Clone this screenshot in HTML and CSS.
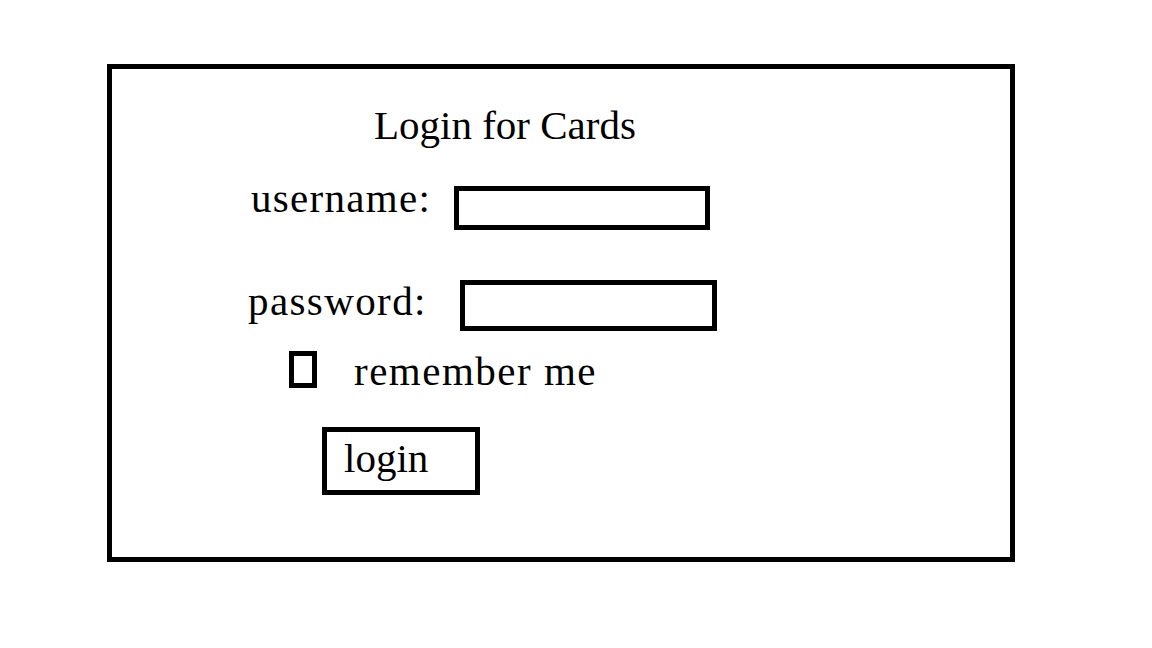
FILE: index.html
```html
<!DOCTYPE html>
<html>
<head>
<meta charset="utf-8">
<title>Login for Cards</title>
<link rel="stylesheet" href="styles.css">
</head>
<body>
<div class="frame">
  <div class="title">Login for Cards</div>
  <div class="row row-user">
    <label class="label label-user" for="u">username:</label>
    <input class="field field-user" id="u" type="text">
  </div>
  <div class="row row-pass">
    <label class="label label-pass" for="p">password:</label>
    <input class="field field-pass" id="p" type="password">
  </div>
  <div class="row row-remember">
    <input class="check" id="r" type="checkbox">
    <label class="label label-remember" for="r">remember me</label>
  </div>
  <div class="row row-login">
    <div class="btn">login</div>
  </div>
</div>
</body>
</html>
```
FILE: styles.css
```css
html, body {
  margin: 0;
  padding: 0;
  background: #ffffff;
}

body {
  font-family: "Liberation Serif", "Times New Roman", serif;
  font-size: 41px;
  line-height: 41px;
  color: #000000;
}

.frame {
  box-sizing: border-box;
  width: 908px;
  height: 498px;
  margin: 64px 0 0 107px;
  border: 5px solid #000;
  padding-top: 36px;
  display: flex;
  flex-direction: column;
  align-items: flex-start;
}

.title {
  margin-left: 262px;
  height: 41px;
}

.row {
  display: flex;
  align-items: flex-start;
}

.label {
  display: block;
  height: 41px;
  padding-top: 2px;
  white-space: nowrap;
}

.row-user {
  margin-top: 30px;
  margin-left: 139px;
}

.label-user {
  width: 203px;
  letter-spacing: 1.3px;
}

.field {
  box-sizing: border-box;
  border: 5px solid #000;
  background: #fff;
  padding: 0;
  margin: 0;
  outline: none;
}

.field-user {
  width: 256px;
  height: 44px;
  margin-top: 10px;
}

.row-pass {
  margin-top: 49px;
  margin-left: 136px;
}

.label-pass {
  width: 212px;
  letter-spacing: 1.4px;
}

.field-pass {
  width: 257px;
  height: 51px;
  margin-top: 1px;
}

.row-remember {
  margin-top: 18px;
  margin-left: 177px;
}

.check {
  appearance: none;
  -webkit-appearance: none;
  box-sizing: border-box;
  width: 28px;
  height: 37px;
  margin: 2px 37px 0 0;
  border: 5px solid #000;
  border-radius: 0;
  background: #fff;
}

.label-remember {
  letter-spacing: 1.5px;
}

.row-login {
  margin-top: 35px;
  margin-left: 210px;
}

.btn {
  box-sizing: border-box;
  width: 158px;
  height: 68px;
  border: 5px solid #000;
  padding: 6px 0 0 17px;
  background: #fff;
}
```
